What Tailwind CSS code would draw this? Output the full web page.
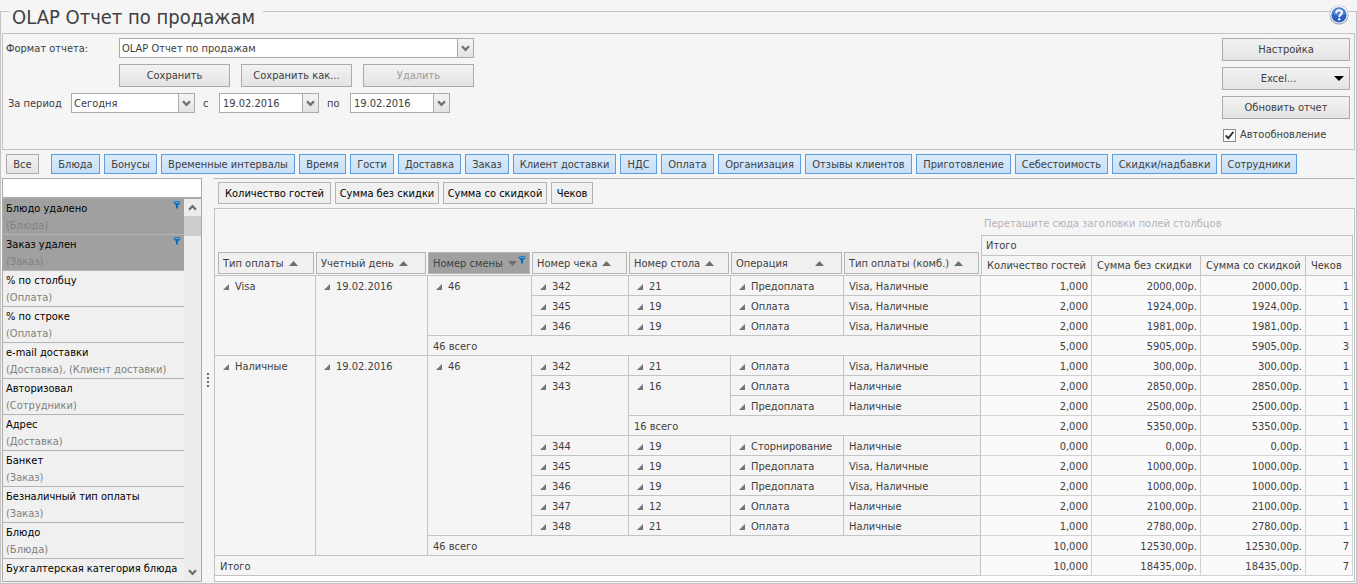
<!DOCTYPE html>
<html lang="ru">
<head>
<meta charset="utf-8">
<meta name="viewport" content="width=device-width, initial-scale=1">
<title>OLAP Отчет по продажам</title>
<script src="https://cdn.jsdelivr.net/npm/@tailwindcss/browser@4"></script>
</head>
<body class="bg-[#f5f5f5] font-['DejaVu_Sans_Condensed','Noto_Sans',sans-serif] text-[11px] leading-4 text-[#404040]">

<!-- Shared icons -->
<svg class="hidden" aria-hidden="true">
  <symbol id="chevron" viewBox="0 0 9 7"><path d="M1 1.2 4.5 4.8 8 1.2" fill="none" stroke="#6e6e6e" stroke-width="2.2"/></symbol>
  <symbol id="funnel" viewBox="0 0 8 8"><path d="M.5 1.400C.5-.1 7.500-.1 7.500 1.400L5 4.600V7.500H3V4.600Z" fill="#0072c6"/><path d="M2 1.500h4" stroke="#8fb4d0" stroke-width=".8"/></symbol>
  <symbol id="sort" viewBox="0 0 9 5"><path d="M4.500 0 9 5H0Z" fill="#6e6e6e"/></symbol>
</svg>

<fieldset class="relative flex h-screen min-w-0 flex-col border border-[#c3c3c3] px-px pb-px">
  <legend class="ml-[7px] h-[23px] pr-2 pl-[3px] text-xl leading-[34px]">OLAP Отчет по продажам</legend>
  <button type="button" aria-label="Справка" class="absolute -top-[18px] right-[7px] size-5">
    <svg viewBox="0 0 20 20" class="size-5"><circle cx="10" cy="10" r="9.500" fill="#8d99ac"/><circle cx="10" cy="9.600" r="8.900" fill="#f4f6fa"/><circle cx="10" cy="10" r="7.600" fill="#2a5fc4"/><path d="M3 9a7 6.500 0 0 1 14 0q-7 3-14 0" fill="#4f82d8"/><path d="M7.200 8.200C7.200 4.300 13 4.500 13 7.600 13 9.600 10.200 9.700 10.200 12" fill="none" stroke="#fff" stroke-width="2"/><circle cx="10.200" cy="14.300" r="1.200" fill="#fff"/></svg>
  </button>

  <!-- Report settings -->
  <section class="mt-[10px] flex h-[117px] shrink-0 items-start justify-between border border-[#c3c3c3] py-1 pr-1 pl-[3px]">
    <div class="flex flex-col gap-[6px]">
      <div class="flex items-center">
        <label for="format" class="w-[113px] pt-px">Формат отчета:</label>
        <div class="flex h-5 w-[355px] border border-[#ababab] bg-white">
          <select id="format" class="min-w-0 flex-1 appearance-none bg-white pt-px pl-[2px] leading-4 outline-none"><option>OLAP Отчет по продажам</option></select>
          <span class="pointer-events-none grid w-4 place-items-center border-l border-[#ababab] bg-linear-to-b from-[#f4f4f4] to-[#e3e3e3]"><svg class="h-[7px] w-[9px]"><use href="#chevron"/></svg></span>
        </div>
      </div>
      <div class="flex gap-[11px] pl-[113px] [&>button]:h-[23px] [&>button]:w-[111px] [&>button]:border [&>button]:border-[#ababab] [&>button]:bg-linear-to-b [&>button]:from-[#f2f2f2] [&>button]:to-[#e4e4e4] [&>button]:pt-px">
        <button type="button">Сохранить</button>
        <button type="button">Сохранить как...</button>
        <button type="button" disabled class="text-[#9c9c9c]">Удалить</button>
      </div>
      <div class="flex items-center">
        <label for="period" class="w-[65px] pt-px pl-[2px]">За период</label>
        <div class="flex h-5 w-[124px] border border-[#ababab] bg-white">
          <select id="period" class="min-w-0 flex-1 appearance-none bg-white pt-px pl-[2px] leading-4 outline-none"><option>Сегодня</option></select>
          <span class="pointer-events-none grid w-4 place-items-center border-l border-[#ababab] bg-linear-to-b from-[#f4f4f4] to-[#e3e3e3]"><svg class="h-[7px] w-[9px]"><use href="#chevron"/></svg></span>
        </div>
        <label for="from" class="w-6 pt-px pl-2">с</label>
        <div class="flex h-5 w-[100px] border border-[#ababab] bg-white">
          <input id="from" type="text" value="19.02.2016" class="min-w-0 flex-1 pt-px pl-[3px] outline-none">
          <button type="button" aria-label="Выбрать дату начала" class="grid w-4 place-items-center border-l border-[#ababab] bg-linear-to-b from-[#f4f4f4] to-[#e3e3e3]"><svg class="h-[7px] w-[9px]"><use href="#chevron"/></svg></button>
        </div>
        <label for="to" class="w-[31px] pt-px pl-2">по</label>
        <div class="flex h-5 w-[100px] border border-[#ababab] bg-white">
          <input id="to" type="text" value="19.02.2016" class="min-w-0 flex-1 pt-px pl-[3px] outline-none">
          <button type="button" aria-label="Выбрать дату окончания" class="grid w-4 place-items-center border-l border-[#ababab] bg-linear-to-b from-[#f4f4f4] to-[#e3e3e3]"><svg class="h-[7px] w-[9px]"><use href="#chevron"/></svg></button>
        </div>
      </div>
    </div>
    <div class="flex w-32 flex-col gap-[6px] [&>button]:h-[23px] [&>button]:border [&>button]:border-[#ababab] [&>button]:bg-linear-to-b [&>button]:from-[#f2f2f2] [&>button]:to-[#e4e4e4]">
      <button type="button">Настройка</button>
      <button type="button" class="flex items-center pr-[5px]"><span class="flex-1">Excel...</span><svg viewBox="0 0 10 5" class="h-[5px] w-[10px]"><path d="M0 0h10L5 5Z"/></svg></button>
      <button type="button">Обновить отчет</button>
      <div class="flex items-center gap-1 pt-[2px] pl-px">
        <span class="grid size-[13px] place-items-center">
          <input id="auto" type="checkbox" checked class="col-start-1 row-start-1 size-[13px] appearance-none border border-[#8c8c8c] bg-white">
          <svg viewBox="0 0 9 9" class="pointer-events-none col-start-1 row-start-1 size-[9px]"><path d="M.7 4.300 3.300 7.200 8.400.8" fill="none" stroke="#333" stroke-width="1.900"/></svg>
        </span>
        <label for="auto">Автообновление</label>
      </div>
    </div>
  </section>

  <!-- Field group filters -->
  <nav class="mt-1 flex shrink-0 gap-1 pl-1 whitespace-nowrap [&>button]:h-5 [&>button]:shrink-0 [&>button]:border [&>button]:border-[#5b9de0] [&>button]:bg-linear-to-b [&>button]:from-[#dbebfb] [&>button]:to-[#c6dff8] [&>button]:pt-px">
    <button type="button" class="mr-2 w-[33px] border-[#ababab]! from-[#f2f2f2]! to-[#e4e4e4]!">Все</button>
    <button type="button" class="w-[49px]">Блюда</button>
    <button type="button" class="w-[53px]">Бонусы</button>
    <button type="button" class="w-[134px]">Временные интервалы</button>
    <button type="button" class="w-[47px]">Время</button>
    <button type="button" class="w-[44px]">Гости</button>
    <button type="button" class="w-[63px]">Доставка</button>
    <button type="button" class="w-[44px]">Заказ</button>
    <button type="button" class="w-[103px]">Клиент доставки</button>
    <button type="button" class="w-[37px]">НДС</button>
    <button type="button" class="w-[53px]">Оплата</button>
    <button type="button" class="w-[83px]">Организация</button>
    <button type="button" class="w-[107px]">Отзывы клиентов</button>
    <button type="button" class="w-[95px]">Приготовление</button>
    <button type="button" class="w-[93px]">Себестоимость</button>
    <button type="button" class="w-[105px]">Скидки/надбавки</button>
    <button type="button" class="w-[76px]">Сотрудники</button>
  </nav>

  <div class="mt-1 flex min-h-0 flex-1">
    <!-- Field list -->
    <aside class="flex w-[200px] shrink-0 flex-col border border-[#ababab]">
      <input type="text" aria-label="Поиск поля" class="h-[18px] shrink-0 bg-white px-1 outline-none">
      <div class="flex min-h-0 flex-1 border-t-2 border-[#ababab]">
        <ul class="min-w-0 flex-1 overflow-hidden bg-[#f0f0f0] whitespace-nowrap text-black [&>li]:h-9 [&>li]:border-b [&>li]:border-[#b4b4b4] [&>li]:pt-px [&>li]:pl-[3px] [&_p]:leading-[17px] [&_small]:block [&_small]:text-[11px] [&_small]:leading-[18px] [&_small]:text-[#808080]">
          <li class="flex justify-between bg-[#a0a0a0] pr-[3px]"><div><p>Блюдо удалено</p><small>(Блюда)</small></div><svg class="mt-px size-2"><use href="#funnel"/></svg></li>
          <li class="flex justify-between bg-[#a0a0a0] pr-[3px]"><div><p>Заказ удален</p><small>(Заказ)</small></div><svg class="mt-px size-2"><use href="#funnel"/></svg></li>
          <li><p>% по столбцу</p><small>(Оплата)</small></li>
          <li><p>% по строке</p><small>(Оплата)</small></li>
          <li><p>e-mail доставки</p><small>(Доставка), (Клиент доставки)</small></li>
          <li><p>Авторизовал</p><small>(Сотрудники)</small></li>
          <li><p>Адрес</p><small>(Доставка)</small></li>
          <li><p>Банкет</p><small>(Заказ)</small></li>
          <li><p>Безналичный тип оплаты</p><small>(Заказ)</small></li>
          <li><p>Блюдо</p><small>(Блюда)</small></li>
          <li><p>Бухгалтерская категория блюда</p><small>(Блюда)</small></li>
        </ul>
        <div class="flex w-[17px] flex-col bg-[#ececec]">
          <button type="button" aria-label="Вверх" class="grid h-[17px] place-items-center"><svg class="h-[7px] w-[9px] rotate-180"><use href="#chevron"/></svg></button>
          <div class="h-5 bg-[#cdcdcd]"></div>
          <button type="button" aria-label="Вниз" class="mt-auto grid h-[17px] place-items-center"><svg class="h-[7px] w-[9px]"><use href="#chevron"/></svg></button>
        </div>
      </div>
    </aside>

    <div class="flex w-3 shrink-0 flex-col items-center justify-center gap-[2px] [&>i]:size-[2px] [&>i]:bg-[#6e6e6e]"><i></i><i></i><i></i><i></i></div>

    <!-- Pivot table -->
    <main class="flex min-w-0 flex-1 flex-col border-t border-[#b4b4b4]">
      <div class="flex h-[29px] shrink-0 items-center gap-1 pb-px pl-1 text-black [&>button]:h-[22px] [&>button]:border [&>button]:border-[#b4b4b4] [&>button]:bg-[#f0f0f0] [&>button]:pt-px">
        <button type="button" class="w-[113px]">Количество гостей</button>
        <button type="button" class="w-[104px]">Сумма без скидки</button>
        <button type="button" class="w-[104px]">Сумма со скидкой</button>
        <button type="button" class="w-[42px]">Чеков</button>
      </div>
      <div class="min-h-0 flex-1 overflow-hidden border border-[#c3c3c3] bg-white pr-px">
        <table class="w-full table-fixed border-separate border-spacing-0 bg-[#f5f5f5] whitespace-nowrap [&_td]:h-5 [&_td]:border-r [&_td]:border-b [&_td]:border-[#c3c3c3] [&_td]:p-0 [&_td]:pt-[2px] [&_td]:pl-[5px] [&_td]:align-top [&_td]:leading-[17px] [&_td_button]:mr-[6px] [&_td_button]:mb-px [&_td_button]:ml-[3px] [&_td_button]:inline-block [&_td_button]:size-[6px] [&_td_button]:bg-[#757575] [&_td_button]:[clip-path:polygon(100%_0,100%_100%,0_100%)] [&_th]:p-0 [&_th]:text-left [&_th]:font-normal [&_td.n]:border-[#d2d2d2] [&_td.n]:bg-[#fafafa] [&_td.n]:pr-[3px] [&_td.n]:text-right">
          <colgroup><col class="w-[101px]"><col class="w-[112px]"><col class="w-[104px]"><col class="w-[97px]"><col class="w-[102px]"><col class="w-[113px]"><col class="w-[137px]"><col class="w-[111px]"><col class="w-[109px]"><col class="w-[105px]"><col class="w-[47px]"></colgroup>
          <thead>
            <tr><th colspan="7" class="h-[26px]"></th><th colspan="4" class="pt-1! pl-[3px]! text-[#b4b4b4]">Перетащите сюда заголовки полей столбцов</th></tr>
            <tr class="[&_button]:flex [&_button]:h-[22px] [&_button]:w-full [&_button]:items-center [&_button]:gap-[5px] [&_button]:border [&_button]:border-[#b4b4b4] [&_button]:bg-[#f0f0f0] [&_button]:pt-px [&_button]:pl-1 [&_svg]:shrink-0 [&>th[rowspan]]:border-b [&>th[rowspan]]:border-[#c3c3c3] [&>th[rowspan]]:pr-[2px]! [&>th[rowspan]]:pb-px! [&>th[rowspan]]:align-bottom">
              <th rowspan="2" class="pl-[3px]!"><button type="button">Тип оплаты<svg class="h-[5px] w-[9px]"><use href="#sort"/></svg></button></th>
              <th rowspan="2"><button type="button">Учетный день<svg class="h-[5px] w-[9px]"><use href="#sort"/></svg></button></th>
              <th rowspan="2"><button type="button" class="bg-[#a0a0a0]!">Номер смены<svg class="h-[5px] w-[9px] rotate-180"><use href="#sort"/></svg><svg class="mr-1 mb-2 -ml-1 size-2 grow-0"><use href="#funnel"/></svg></button></th>
              <th rowspan="2"><button type="button">Номер чека<svg class="h-[5px] w-[9px]"><use href="#sort"/></svg></button></th>
              <th rowspan="2"><button type="button">Номер стола<svg class="h-[5px] w-[9px]"><use href="#sort"/></svg></button></th>
              <th rowspan="2"><button type="button">Операция<svg class="mr-[17px] ml-auto h-[5px] w-[9px]"><use href="#sort"/></svg></button></th>
              <th rowspan="2"><button type="button">Тип оплаты (комб.)<svg class="h-[5px] w-[9px]"><use href="#sort"/></svg></button></th>
              <th colspan="4" class="h-[21px] border border-[#c3c3c3] pt-px! pl-1!">Итого</th>
            </tr>
            <tr class="[&>th]:h-5 [&>th]:border-r [&>th]:border-b [&>th]:border-[#c3c3c3] [&>th]:pt-px! [&>th]:pl-[5px]!">
              <th class="border-l pl-[3px]!">Количество гостей</th><th>Сумма без скидки</th><th>Сумма со скидкой</th><th>Чеков</th>
            </tr>
          </thead>
          <tbody>
            <tr><td rowspan="4"><button type="button" aria-label="Свернуть"></button>Visa</td><td rowspan="4"><button type="button" aria-label="Свернуть"></button>19.02.2016</td><td rowspan="3"><button type="button" aria-label="Свернуть"></button>46</td><td><button type="button" aria-label="Свернуть"></button>342</td><td><button type="button" aria-label="Свернуть"></button>21</td><td><button type="button" aria-label="Свернуть"></button>Предоплата</td><td>Visa, Наличные</td><td class="n">1,000</td><td class="n">2000,00р.</td><td class="n">2000,00р.</td><td class="n">1</td></tr>
            <tr><td><button type="button" aria-label="Свернуть"></button>345</td><td><button type="button" aria-label="Свернуть"></button>19</td><td><button type="button" aria-label="Свернуть"></button>Оплата</td><td>Visa, Наличные</td><td class="n">2,000</td><td class="n">1924,00р.</td><td class="n">1924,00р.</td><td class="n">1</td></tr>
            <tr><td><button type="button" aria-label="Свернуть"></button>346</td><td><button type="button" aria-label="Свернуть"></button>19</td><td><button type="button" aria-label="Свернуть"></button>Оплата</td><td>Visa, Наличные</td><td class="n">2,000</td><td class="n">1981,00р.</td><td class="n">1981,00р.</td><td class="n">1</td></tr>
            <tr><td colspan="5">46 всего</td><td class="n">5,000</td><td class="n">5905,00р.</td><td class="n">5905,00р.</td><td class="n">3</td></tr>
            <tr><td rowspan="10"><button type="button" aria-label="Свернуть"></button>Наличные</td><td rowspan="10"><button type="button" aria-label="Свернуть"></button>19.02.2016</td><td rowspan="9"><button type="button" aria-label="Свернуть"></button>46</td><td><button type="button" aria-label="Свернуть"></button>342</td><td><button type="button" aria-label="Свернуть"></button>21</td><td><button type="button" aria-label="Свернуть"></button>Оплата</td><td>Visa, Наличные</td><td class="n">1,000</td><td class="n">300,00р.</td><td class="n">300,00р.</td><td class="n">1</td></tr>
            <tr><td rowspan="3"><button type="button" aria-label="Свернуть"></button>343</td><td rowspan="2"><button type="button" aria-label="Свернуть"></button>16</td><td><button type="button" aria-label="Свернуть"></button>Оплата</td><td>Наличные</td><td class="n">2,000</td><td class="n">2850,00р.</td><td class="n">2850,00р.</td><td class="n">1</td></tr>
            <tr><td><button type="button" aria-label="Свернуть"></button>Предоплата</td><td>Наличные</td><td class="n">2,000</td><td class="n">2500,00р.</td><td class="n">2500,00р.</td><td class="n">1</td></tr>
            <tr><td colspan="3">16 всего</td><td class="n">2,000</td><td class="n">5350,00р.</td><td class="n">5350,00р.</td><td class="n">1</td></tr>
            <tr><td><button type="button" aria-label="Свернуть"></button>344</td><td><button type="button" aria-label="Свернуть"></button>19</td><td><button type="button" aria-label="Свернуть"></button>Сторнирование</td><td>Наличные</td><td class="n">0,000</td><td class="n">0,00р.</td><td class="n">0,00р.</td><td class="n">1</td></tr>
            <tr><td><button type="button" aria-label="Свернуть"></button>345</td><td><button type="button" aria-label="Свернуть"></button>19</td><td><button type="button" aria-label="Свернуть"></button>Предоплата</td><td>Visa, Наличные</td><td class="n">2,000</td><td class="n">1000,00р.</td><td class="n">1000,00р.</td><td class="n">1</td></tr>
            <tr><td><button type="button" aria-label="Свернуть"></button>346</td><td><button type="button" aria-label="Свернуть"></button>19</td><td><button type="button" aria-label="Свернуть"></button>Предоплата</td><td>Visa, Наличные</td><td class="n">2,000</td><td class="n">1000,00р.</td><td class="n">1000,00р.</td><td class="n">1</td></tr>
            <tr><td><button type="button" aria-label="Свернуть"></button>347</td><td><button type="button" aria-label="Свернуть"></button>12</td><td><button type="button" aria-label="Свернуть"></button>Оплата</td><td>Наличные</td><td class="n">2,000</td><td class="n">2100,00р.</td><td class="n">2100,00р.</td><td class="n">1</td></tr>
            <tr><td><button type="button" aria-label="Свернуть"></button>348</td><td><button type="button" aria-label="Свернуть"></button>21</td><td><button type="button" aria-label="Свернуть"></button>Оплата</td><td>Наличные</td><td class="n">1,000</td><td class="n">2780,00р.</td><td class="n">2780,00р.</td><td class="n">1</td></tr>
            <tr><td colspan="5">46 всего</td><td class="n">10,000</td><td class="n">12530,00р.</td><td class="n">12530,00р.</td><td class="n">7</td></tr>
            <tr><td colspan="7">Итого</td><td class="n">10,000</td><td class="n">18435,00р.</td><td class="n">18435,00р.</td><td class="n">7</td></tr>
          </tbody>
        </table>
      </div>
    </main>
  </div>
</fieldset>
</body>
</html>
